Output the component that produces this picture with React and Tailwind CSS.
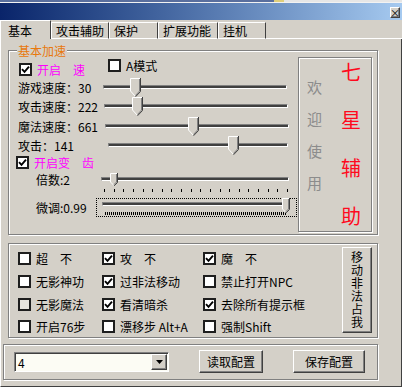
import React from "react";

function Box({ checked, dim }) {
  return (
    <span
      className={`flex h-[13px] w-[13px] shrink-0 items-center justify-center border-2 border-[#1e1e1e] ${
        dim ? "bg-[#e6e4de]" : "bg-white"
      }`}
    >
      {checked && (
        <svg width="9" height="9" viewBox="0 0 9 9">
          <path d="M1 4.2 L3.5 6.8 L8 1.6" stroke="#000" strokeWidth="1.9" fill="none" />
        </svg>
      )}
    </span>
  );
}

function Thumb({ w = 11, h = 19 }) {
  const b = h - Math.ceil(w / 2);
  const m = w / 2;
  return (
    <svg width={w} height={h} viewBox={`0 0 ${w} ${h}`}>
      <path d={`M0 0 H${w} V${b} L${m} ${h} L0 ${b} Z`} fill="#d4d0c8" />
      <path d={`M0.5 ${b} V0.5 H${w - 1}`} stroke="#fff" fill="none" />
      <path d={`M0.5 ${b} L${m} ${h - 0.5}`} stroke="#fff" fill="none" />
      <path d={`M${w - 1.5} 1 V${b} L${m} ${h - 1.5}`} stroke="#808080" fill="none" />
      <path d={`M${w - 0.5} 0 V${b + 0.5} L${m} ${h - 0.2}`} stroke="#404040" fill="none" />
    </svg>
  );
}

function Track({ className, pos, thumbTop, tw, th }) {
  return (
    <div className={`relative h-[4px] border-t border-l border-b border-r border-t-[#808080] border-l-[#808080] border-b-white border-r-white bg-[#404040] ${className}`}>
      <div className={`absolute ${thumbTop}`} style={{ left: pos }}>
        <Thumb w={tw} h={th} />
      </div>
    </div>
  );
}

function SliderRow({ h, label, lw, tw, pos }) {
  return (
    <div className={`flex items-center pl-[9px] ${h}`}>
      <span className={`shrink-0 ${lw}`}>{label}</span>
      <Track className={tw} pos={pos} thumbTop="top-[-8px]" />
    </div>
  );
}

function Check({ checked, dim, children, gap = "ml-[5px]", color = "" }) {
  return (
    <div className="flex items-center">
      <Box checked={checked} dim={dim} />
      <span className={`${gap} whitespace-nowrap ${color}`}>{children}</span>
    </div>
  );
}

const tabs = [
  { label: "攻击辅助", w: "w-[58px]" },
  { label: "保护", w: "w-[49px]" },
  { label: "扩展功能", w: "w-[60px]" },
  { label: "挂机", w: "w-[48px]" },
];

const options = [
  { t: "超　不" },
  { t: "攻　不", c: true },
  { t: "魔　不", c: true },
  { t: "无影神功" },
  { t: "过非法移动", c: true },
  { t: "禁止打开NPC" },
  { t: "无影魔法", d: true },
  { t: "看清暗杀", c: true },
  { t: "去除所有提示框", c: true },
  { t: "开启76步" },
  { t: "漂移步 Alt+A" },
  { t: "强制Shift" },
];

const etched = "border border-[#808080] shadow-[inset_1px_1px_0_#fff,1px_1px_0_#fff]";
const raised =
  "border border-t-white border-l-white border-r-[#404040] border-b-[#404040] bg-[#d4d0c8] shadow-[inset_-1px_-1px_0_#808080]";

export default function App() {
  return (
    <div className="flex h-[387px] w-[402px] flex-col overflow-hidden bg-[#d4d0c8] font-['Noto_Sans_CJK_SC',sans-serif] text-[12px] leading-[13px] text-black">
      {/* desktop strip behind the window */}
      <div className="flex h-[2px]">
        <div className="w-[274px] bg-[#5a6f9e]" />
        <div className="w-[10px] bg-[#e0cf7a]" />
        <div className="flex-1 bg-[#e6e6e6]" />
      </div>
      <div className="h-[1px] bg-[#f2f2f2]" />

      {/* title bar */}
      <div className="flex h-[17px] shrink-0 items-start justify-end bg-linear-to-r from-[#0a246a] to-[#a6caf0]">
        <div className={`mr-[2px] mt-[4px] flex h-[11px] w-[10px] items-center justify-center text-[10px] leading-none ${raised}`}>
          ×
        </div>
      </div>

      {/* tabs */}
      <div className="flex h-[19px] shrink-0 items-end">
        <div className="flex h-[19px] w-[51px] items-center border-t border-l border-r border-t-white border-l-white border-r-[#404040] pl-[7px] pt-[1px]">
          基本
        </div>
        {tabs.map((t) => (
          <div
            key={t.label}
            className={`flex h-[17px] items-center border border-white border-r-[#404040] pl-[4px] ${t.w}`}
          >
            {t.label}
          </div>
        ))}
        <div className="h-[1px] flex-1 bg-white" />
      </div>

      {/* page */}
      <div className="flex flex-1 flex-col border-l border-r border-b border-l-white border-r-[#404040] border-b-[#404040]">
        {/* 基本加速 */}
        <div className={`relative ml-[7px] mt-[11px] flex h-[185px] w-[370px] ${etched}`}>
          <span className="absolute left-[8px] top-[-7px] bg-[#d4d0c8] px-[1px] text-[#e8780c]">基本加速</span>

          <div className="flex w-[289px] flex-col pt-[7px]">
            <div className="flex h-[20px] items-start pl-[10px]">
              <div className="mt-[5px] w-[89px]">
                <Check checked color="text-[#ff00ff]">开启　速</Check>
              </div>
              <div className="mt-[1px]">
                <Check gap="ml-[5px]">A模式</Check>
              </div>
            </div>

            <SliderRow h="h-[18px]" label="游戏速度：30" lw="w-[85px]" tw="w-[184px]" pos={26} />
            <SliderRow h="h-[20px]" label="攻击速度：222" lw="w-[86px]" tw="w-[184px]" pos={27} />
            <SliderRow h="h-[20px]" label="魔法速度：661" lw="w-[87px]" tw="w-[184px]" pos={82} />
            <SliderRow h="h-[18px]" label="攻击：141" lw="w-[90px]" tw="w-[180px]" pos={119} />

            <div className="flex h-[16px] items-center pl-[7px]">
              <Check checked color="text-[#ff00ff]">开启变　齿</Check>
            </div>

            <div className="flex h-[18px] items-center pl-[27px]">
              <span className="w-[65px] shrink-0">倍数:2</span>
              <Track className="w-[188px]" pos={8} thumbTop="top-[-5px]" tw={8} th={13} />
            </div>
            <div className="ml-[95px] flex h-[6px] w-[184px] items-start justify-between">
              {Array.from({ length: 20 }).map((_, i) => (
                <div key={i} className="mt-[1px] h-[3px] w-[1px] shrink-0 bg-black" />
              ))}
            </div>

            <div className="mt-[4px] flex items-center pl-[27px]">
              <span className="w-[60px] shrink-0">微调:0.99</span>
              <div className="flex h-[19px] w-[201px] flex-col border border-dotted border-black pl-[5px] pt-[3px]">
                <Track className="w-[187px]" pos={179} thumbTop="top-[-5px]" tw={8} th={15} />
                <div className="ml-[3px] mt-[6px] flex h-[3px] w-[182px] gap-[1px]">
                  {Array.from({ length: 91 }).map((_, i) => (
                    <div key={i} className="h-[3px] w-[1px] shrink-0 bg-black" />
                  ))}
                </div>
              </div>
            </div>
          </div>

          {/* 欢迎使用 */}
          <div className={`mt-[6px] flex h-[175px] w-[74px] ${etched}`}>
            <div className="ml-[8px] flex flex-col gap-[16px] pt-[21px] text-[15px] leading-[16px] text-[#8c8c8c]">
              {["欢", "迎", "使", "用"].map((c) => (
                <span key={c}>{c}</span>
              ))}
            </div>
            <div className="ml-[19px] flex flex-col gap-[28px] pt-[4px] text-[20px] leading-[20px] text-[#ff0a1e]">
              {["七", "星", "辅", "助"].map((c) => (
                <span key={c}>{c}</span>
              ))}
            </div>
          </div>
        </div>

        {/* 功能选项 */}
        <div className={`ml-[7px] mt-[8px] flex h-[95px] w-[370px] ${etched}`}>
          <div className="grid grid-cols-[84px_101px_130px] grid-rows-[23px_23px_22px_22px] pl-[9px] pt-[3px]">
            {options.map((o) => (
              <div key={o.t} className="flex items-center">
                <Check checked={o.c} dim={o.d}>
                  {o.t}
                </Check>
              </div>
            ))}
          </div>
          <button
            className={`ml-auto mr-[5px] mt-[3px] flex h-[86px] w-[30px] items-center justify-center ${raised}`}
          >
            <span className="tracking-[1px] [writing-mode:vertical-rl]">移动非法占我</span>
          </button>
        </div>

        {/* 配置 */}
        <div className={`ml-[2px] mt-[6px] flex h-[36px] w-[375px] items-start ${etched}`}>
          <div className="ml-[10px] mt-[7px] flex h-[20px] w-[155px] items-center border border-t-[#808080] border-l-[#808080] border-b-white border-r-white bg-[#fcfcf4] shadow-[inset_1px_1px_0_#404040]">
            <span className="ml-[3px] flex-1">4</span>
            <div className={`mr-[1px] flex h-[16px] w-[16px] items-center justify-center ${raised}`}>
              <svg width="7" height="4" viewBox="0 0 7 4">
                <path d="M0 0 H7 L3.5 4 Z" fill="#000" />
              </svg>
            </div>
          </div>
          <button className={`ml-[30px] mt-[5px] flex h-[23px] w-[64px] items-center justify-center ${raised}`}>
            读取配置
          </button>
          <button className={`ml-[30px] mt-[5px] flex h-[23px] w-[72px] items-center justify-center ${raised}`}>
            保存配置
          </button>
        </div>
      </div>
    </div>
  );
}
